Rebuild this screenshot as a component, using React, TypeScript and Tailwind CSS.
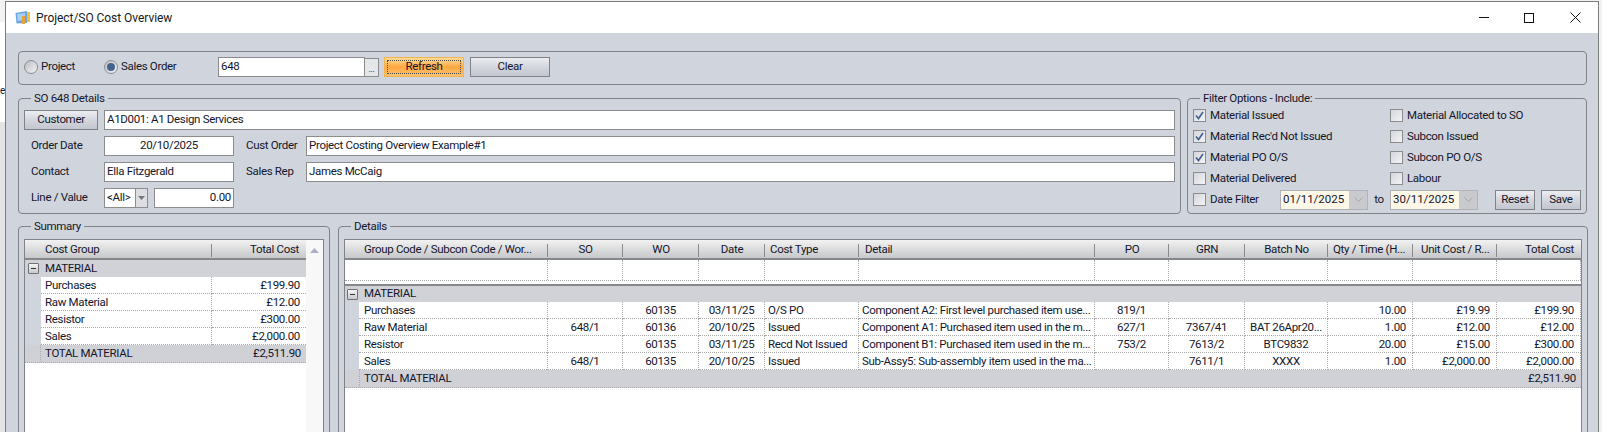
import type { ReactNode } from "react";

const summaryRows = [
  ["Purchases", "£199.90"],
  ["Raw Material", "£12.00"],
  ["Resistor", "£300.00"],
  ["Sales", "£2,000.00"],
];

const detailRows = [
  ["Purchases", "", "60135", "03/11/25", "O/S PO", "Component A2: First level purchased item use...", "819/1", "", "", "10.00", "£19.99", "£199.90"],
  ["Raw Material", "648/1", "60136", "20/10/25", "Issued", "Component A1: Purchased item used in the m...", "627/1", "7367/41", "BAT 26Apr20...", "1.00", "£12.00", "£12.00"],
  ["Resistor", "", "60135", "03/11/25", "Recd Not Issued", "Component B1: Purchased item used in the m...", "753/2", "7613/2", "BTC9832", "20.00", "£15.00", "£300.00"],
  ["Sales", "648/1", "60135", "20/10/25", "Issued", "Sub-Assy5: Sub-assembly item used in the ma...", "", "7611/1", "XXXX", "1.00", "£2,000.00", "£2,000.00"],
];

const detailCols = "grid grid-cols-[203px_75px_76px_66px_94px_236px_74px_76px_83px_85px_84px_84px]";
const cellAlign = ["pl-[5px]", "text-center", "text-center", "text-center", "pl-[3px]", "pl-[3px]", "text-center", "text-center", "text-center", "text-right pr-[6px]", "text-right pr-[6px]", "text-right pr-[6px]"];

function Field({ className = "", children }: { className?: string; children?: ReactNode }) {
  return (
    <div className={`flex h-[20px] items-center border border-[#8c8c8c] bg-white px-[2px] ${className}`}>{children}</div>
  );
}

function Check({ label, checked }: { label: string; checked?: boolean }) {
  return (
    <div className="flex h-[21px] items-center gap-[4px]">
      <span className="flex h-[13px] w-[13px] items-center justify-center border border-[#8c8c8c] bg-gradient-to-br from-[#d4d6dc] to-[#f4f4f6]">
        {checked && (
          <svg width="11" height="11" viewBox="0 0 11 11">
            <path d="M2 5.5 L4.5 8.5 L9 2" fill="none" stroke="#47628f" strokeWidth="1.7" />
          </svg>
        )}
      </span>
      <span>{label}</span>
    </div>
  );
}

function Radio({ label, selected, className }: { label: string; selected?: boolean; className: string }) {
  return (
    <div className={`flex items-center gap-[3px] ${className}`}>
      <span className="flex h-[14px] w-[14px] items-center justify-center rounded-full border border-[#8c8c8c] bg-gradient-to-br from-[#b9bcc3] to-[#f7f7f8]">
        {selected && <span className="h-[8px] w-[8px] rounded-full bg-[#43638f]" />}
      </span>
      <span>{label}</span>
    </div>
  );
}

function SilverButton({ className = "", children }: { className?: string; children: ReactNode }) {
  return (
    <div className={`flex items-center justify-center border border-[#808287] bg-gradient-to-b from-[#eceef2] via-[#d3d6dd] to-[#c3c6ce] ${className}`}>
      {children}
    </div>
  );
}

function DateBox({ value }: { value: string }) {
  return (
    <div className="flex h-[20px] w-[88px] border border-[#b2b3b6] bg-[#fdf7e8]">
      <span className="flex-1 pl-[2px] leading-[17px] tracking-[0px]">{value}</span>
      <span className="flex w-[18px] items-center justify-center bg-[#c9cace]">
        <svg width="9" height="5" viewBox="0 0 9 5">
          <path d="M0.5 0.5 L4.5 4.5 L8.5 0.5" fill="none" stroke="#a5a6aa" />
        </svg>
      </span>
    </div>
  );
}

function Expander() {
  return (
    <span className="flex h-[11px] w-[11px] items-center justify-center rounded-[1px] border border-[#6f7278] bg-gradient-to-b from-[#f4f4f4] to-[#c8c9cd]">
      <span className="h-px w-[5px] bg-[#333]" />
    </span>
  );
}

function HeaderSep() {
  return <span className="absolute right-0 top-[4px] h-[13px] w-px bg-[#8a8b8f]" />;
}

function Group({ title, className = "", children }: { title: string; className?: string; children: ReactNode }) {
  return (
    <fieldset className={`rounded-[4px] border border-[#808287] ${className}`}>
      <legend className="ml-[7px] px-[3px] leading-[14px]">{title}</legend>
      {children}
    </fieldset>
  );
}

export default function App() {
  return (
    <div className="flex h-[432px] w-[1602px] overflow-hidden bg-[#f1f1f1] font-['Roboto',sans-serif] text-[11.5px] tracking-[-0.32px] whitespace-nowrap text-[#14162b]">
      <div className="flex w-[5px] flex-col overflow-hidden">
        <div className="h-[22px] bg-[#f2f2f2]" />
        <div className="h-[100px] bg-white">
          <div className="mt-[62px] w-[5px] overflow-hidden text-[10px] leading-[14px]">e</div>
        </div>
        <div className="flex-1 bg-[#e4e4e4]" />
      </div>

      <div className="mt-px flex h-[432px] w-[1594px] flex-col border-x border-t border-[#7c7c7c]">
        {/* title bar */}
        <div className="flex h-[31px] shrink-0 items-center bg-white">
          <svg className="ml-[9px]" width="16" height="15" viewBox="0 0 16 15">
            <path d="M0.5 3 L12 1 L12 13 L1.5 13.5 Z" fill="#6aa5e0" />
            <path d="M2 4 L10 3 L10 10 L2.5 11 Z" fill="#a9cff0" />
            <rect x="7" y="6" width="3" height="8" fill="#e9a23b" />
            <rect x="12" y="2" width="3" height="10" fill="#f3c23e" />
          </svg>
          <span className="ml-[5px] text-[12px] tracking-[-0.05px] text-[#1a1a1a]">Project/SO Cost Overview</span>
          <div className="ml-auto flex items-center">
            <span className="mr-[35px] h-px w-[10px] bg-[#111]" />
            <span className="mr-[36px] h-[10px] w-[10px] border border-[#111]" />
            <svg className="mr-[17px]" width="11" height="11" viewBox="0 0 11 11">
              <path d="M0.5 0.5 L10.5 10.5 M10.5 0.5 L0.5 10.5" stroke="#111" />
            </svg>
          </div>
        </div>

        <div className="flex flex-1 flex-col overflow-hidden bg-[#d0d4dd] pl-[12px] pr-[11px] pt-[18px]">
          {/* search bar */}
          <div className="flex h-[34px] shrink-0 items-center rounded-[4px] border border-[#808287] pb-[2px] pl-[5px]">
            <Radio label="Project" className="w-[80px]" />
            <Radio label="Sales Order" selected className="w-[114px]" />
            <Field className="h-[19px] w-[147px]">648</Field>
            <div className="flex h-[19px] w-[14px] items-end justify-center border border-l-0 border-[#8c8c8c] bg-[#e4e6ea] pb-[2px] text-[9px] leading-[9px]">...</div>
            <div className="ml-[5px] h-[20px] w-[80px] border border-[#f5b44c] bg-gradient-to-b from-[#ffdc94] via-[#ffa83e] to-[#ffc272] p-[2px]">
              <div className="flex h-full items-center justify-center border border-dotted border-[#4c4c4c]">Refresh</div>
            </div>
            <SilverButton className="ml-[6px] h-[20px] w-[80px]">Clear</SilverButton>
          </div>

          {/* details + filters */}
          <div className="mt-[6px] flex shrink-0 gap-[6px]">
            <Group title="SO 648 Details" className="h-[123px] w-[1163px] pl-[5px] pr-[5px] pt-[5px]">
              <div className="flex flex-col gap-[6px]">
                <div className="flex">
                  <SilverButton className="h-[20px] w-[74px]">Customer</SilverButton>
                  <Field className="ml-[6px] flex-1">A1D001: A1 Design Services</Field>
                </div>
                <div className="flex items-center">
                  <span className="w-[80px] pl-[7px]">Order Date</span>
                  <Field className="w-[130px] justify-center">20/10/2025</Field>
                  <span className="w-[72px] pl-[12px]">Cust Order</span>
                  <Field className="flex-1">Project Costing Overview Example#1</Field>
                </div>
                <div className="flex items-center">
                  <span className="w-[80px] pl-[7px]">Contact</span>
                  <Field className="w-[130px]">Ella Fitzgerald</Field>
                  <span className="w-[72px] pl-[12px]">Sales Rep</span>
                  <Field className="flex-1">James McCaig</Field>
                </div>
                <div className="flex items-center">
                  <span className="w-[80px] pl-[7px]">Line / Value</span>
                  <Field className="w-[31px] border-r-0">&lt;All&gt;</Field>
                  <div className="flex h-[20px] w-[13px] items-center justify-center border border-[#8c8c8c] bg-[#dcdee3]">
                    <svg width="7" height="4" viewBox="0 0 7 4">
                      <path d="M0 0 H7 L3.5 4 Z" fill="#73767c" />
                    </svg>
                  </div>
                  <Field className="ml-[6px] w-[80px] justify-end">0.00</Field>
                </div>
              </div>
            </Group>

            <Group title="Filter Options - Include:" className="h-[123px] flex-1 pl-[5px] pr-[5px]">
              <div className="grid grid-cols-[197px_1fr]">
                <Check label="Material Issued" checked />
                <Check label="Material Allocated to SO" />
                <Check label="Material Rec'd Not Issued" checked />
                <Check label="Subcon Issued" />
                <Check label="Material PO O/S" checked />
                <Check label="Subcon PO O/S" />
                <Check label="Material Delivered" />
                <Check label="Labour" />
              </div>
              <div className="flex items-center">
                <div className="w-[87px]">
                  <Check label="Date Filter" />
                </div>
                <DateBox value="01/11/2025" />
                <span className="w-[22px] text-center">to</span>
                <DateBox value="30/11/2025" />
                <SilverButton className="ml-[17px] h-[20px] w-[40px]">Reset</SilverButton>
                <SilverButton className="ml-[6px] h-[20px] w-[40px]">Save</SilverButton>
              </div>
            </Group>
          </div>

          {/* grids */}
          <div className="mt-[5px] flex shrink-0 gap-[8px]">
            <Group title="Summary" className="h-[240px] w-[311px] px-[5px] pt-[6px]">
              <div className="flex h-[230px] border border-[#808287] bg-white">
                <div className="w-[281px]">
                  <div className="grid h-[20px] grid-cols-[187px_94px] border-b-2 border-[#85878b] bg-gradient-to-b from-[#f2f2f2] to-[#c7c8ca]">
                    <div className="relative pl-[20px] leading-[19px]">
                      Cost Group
                      <HeaderSep />
                    </div>
                    <div className="pr-[7px] text-right leading-[19px]">Total Cost</div>
                  </div>
                  <div className="flex h-[17px] items-center gap-[6px] bg-[#d0d2d8] pl-[3px]">
                    <Expander />
                    <span>MATERIAL</span>
                  </div>
                  {summaryRows.map(([name, cost]) => (
                    <div key={name} className="grid h-[17px] grid-cols-[16px_171px_94px] leading-[16px]">
                      <div className="bg-[#d0d4dd]" />
                      <div className="border-b border-r border-dotted border-[#a9a9a9] pl-[4px]">{name}</div>
                      <div className="border-b border-dotted border-[#a9a9a9] pr-[6px] text-right">{cost}</div>
                    </div>
                  ))}
                  <div className="grid h-[18px] grid-cols-[16px_171px_94px] border-b border-dotted border-[#a9a9a9] bg-[#d0d1d6] leading-[17px]">
                    <div className="border-r border-dotted border-[#a9a9a9]" />
                    <div className="pl-[4px]">TOTAL MATERIAL</div>
                    <div className="pr-[5px] text-right">£2,511.90</div>
                  </div>
                </div>
                <div className="flex w-[17px] justify-center bg-[#f8f8f9] pt-[8px]">
                  <svg width="9" height="5" viewBox="0 0 9 5">
                    <path d="M4.5 0 L9 5 H0 Z" fill="#a9b0c4" />
                  </svg>
                </div>
              </div>
            </Group>

            <Group title="Details" className="h-[240px] flex-1 px-[5px] pt-[6px]">
              <div className="h-[230px] border border-[#808287] bg-white">
                <div className={`${detailCols} h-[20px] border-b-2 border-[#85878b] bg-gradient-to-b from-[#f2f2f2] to-[#c7c8ca] leading-[19px]`}>
                  <div className="relative pl-[19px]">Group Code / Subcon Code / Wor...<HeaderSep /></div>
                  <div className="relative text-center">SO<HeaderSep /></div>
                  <div className="relative text-center">WO<HeaderSep /></div>
                  <div className="relative text-center">Date<HeaderSep /></div>
                  <div className="relative pl-[5px]">Cost Type<HeaderSep /></div>
                  <div className="relative pl-[6px]">Detail<HeaderSep /></div>
                  <div className="relative text-center">PO<HeaderSep /></div>
                  <div className="relative text-center">GRN<HeaderSep /></div>
                  <div className="relative text-center">Batch No<HeaderSep /></div>
                  <div className="relative pl-[5px]">Qty / Time (H...<HeaderSep /></div>
                  <div className="relative pl-[8px]">Unit Cost / R...<HeaderSep /></div>
                  <div className="pr-[7px] text-right">Total Cost</div>
                </div>
                <div className={`${detailCols} h-[21px] border-b border-dotted border-[#a9a9a9]`}>
                  {cellAlign.map((_, i) => (
                    <div key={i} className="border-r border-dotted border-[#a9a9a9]" />
                  ))}
                </div>
                <div className="h-[3px]" />
                <div className="flex h-[18px] items-center gap-[6px] border-t-2 border-[#85878b] bg-[#d0d2d8] pl-[2px]">
                  <Expander />
                  <span>MATERIAL</span>
                </div>
                {detailRows.map((row) => (
                  <div key={row[0]} className={`${detailCols} h-[17px] leading-[16px]`}>
                    {row.map((text, i) =>
                      i === 0 ? (
                        <div key={i} className="flex border-r border-dotted border-[#a9a9a9]">
                          <div className="w-[14px] bg-[#d0d4dd]" />
                          <div className="flex-1 border-b border-dotted border-[#a9a9a9] pl-[5px]">{text}</div>
                        </div>
                      ) : (
                        <div key={i} className={`overflow-hidden border-b border-r border-dotted border-[#a9a9a9] ${cellAlign[i]}`}>
                          {text}
                        </div>
                      ),
                    )}
                  </div>
                ))}
                <div className="flex h-[18px] w-[1236px] justify-between border-b border-dotted border-[#a9a9a9] bg-[#d0d1d6] leading-[17px]">
                  <div className="ml-[14px] border-l border-dotted border-[#a9a9a9] pl-[4px]">TOTAL MATERIAL</div>
                  <div className="pr-[5px]">£2,511.90</div>
                </div>
              </div>
            </Group>
          </div>
        </div>
      </div>
    </div>
  );
}
